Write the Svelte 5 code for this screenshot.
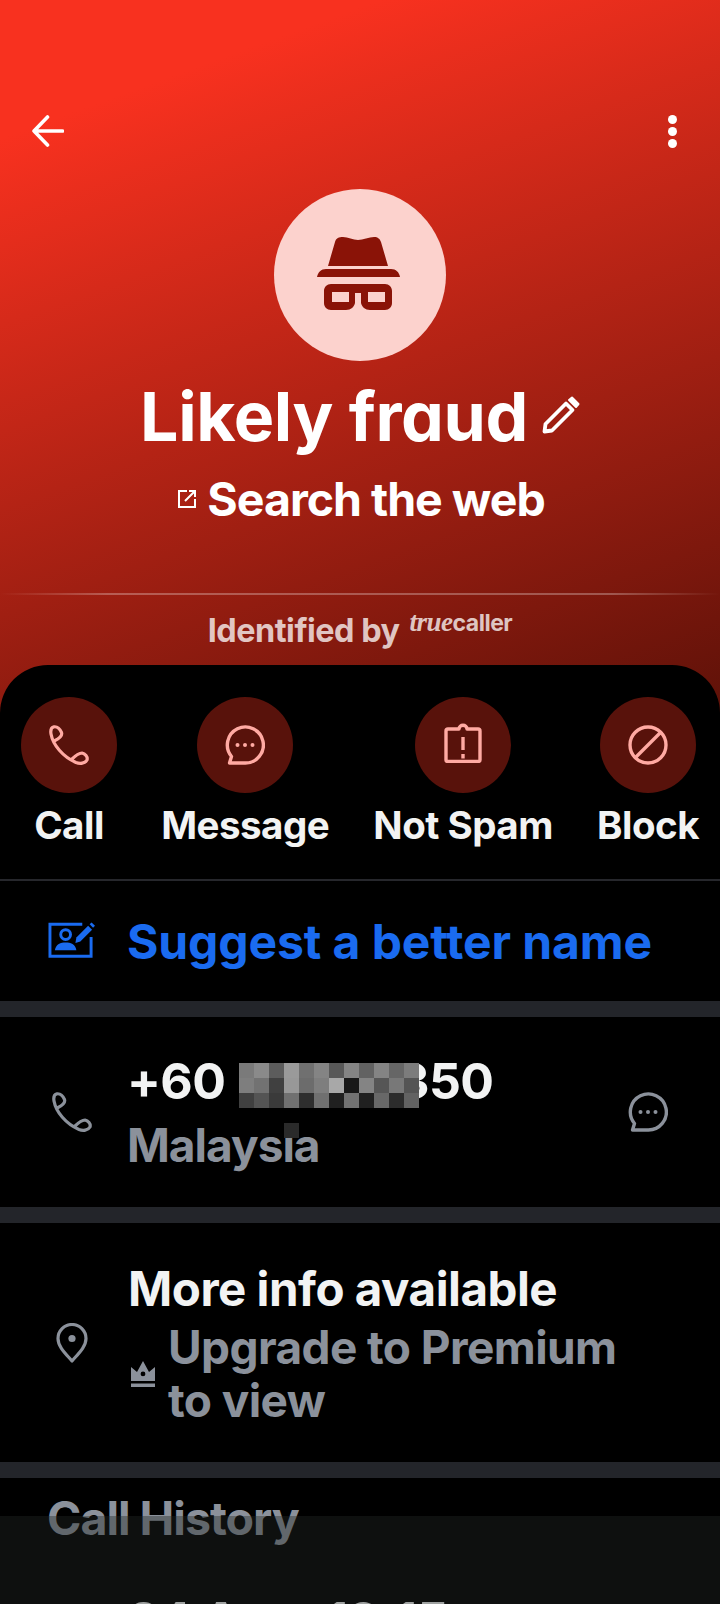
<script>
  const mosaic = [
    '#7a7a7a','#8a8a8a','#5c5c5c','#9a9a9a','#707070','#848484','#585858','#848484','#626262','#848484','#666666','#7c7c7c',
    '#7e7e7e','#727272','#404040','#989898','#6c6c6c','#7e7e7e','#a8a8a8','#181818','#848484','#565656','#787878','#545454',
    '#404040','#545454','#3a3a3a','#707070','#2e2e2e','#707070','#202020','#727272','#202020','#686868','#2c2c2c','#626262'
  ];
</script>

{#snippet phone()}
  <svg class="i40" viewBox="0 0 40 40" fill="none" stroke="currentColor" stroke-width="3.2" stroke-linejoin="round" stroke-linecap="round">
    <path d="M6 15.5 C10 13.5 13.5 10.5 12.5 7.5 C11 4 8 1.5 5 1.8 C2 2.5 1.5 6 2 9 C4 20 14 32 27 37.5 C31 39 36 38.5 38 35 C39 32 36 28.5 33 28 C30 28 26 31 22.5 34.5"/>
  </svg>
{/snippet}

{#snippet bubble()}
  <svg class="i40" viewBox="0 0 40 40" fill="none" stroke="currentColor" stroke-width="3.4" stroke-linejoin="round">
    <path d="M20 38 H4.5 L6.5 31.5 A18 18 0 1 1 20 38 Z"/>
    <circle cx="12.5" cy="20" r="2" fill="currentColor" stroke="none"/>
    <circle cx="20" cy="20" r="2" fill="currentColor" stroke="none"/>
    <circle cx="27.5" cy="20" r="2" fill="currentColor" stroke="none"/>
  </svg>
{/snippet}

<div class="page">
  <header class="hero">
    <div class="topbar">
      <svg class="back" viewBox="0 0 32 32" fill="none" stroke="#fff" stroke-width="3.6" stroke-linecap="round" stroke-linejoin="round">
        <path d="M2 16 H30.5 M15.5 2 L2 16 L15.5 30"/>
      </svg>
      <div class="dots"><i></i><i></i><i></i></div>
    </div>
    <div class="avatar">
      <svg viewBox="0 0 172 172" fill="#8a1307">
        <path d="M54 77 L61 53 C62 49 65 48 69 48 C74 48 79 51 84 51 C89 51 95 48 100 48 C104 48 106 50 107 53 L114 77 Z"/>
        <path d="M43 88 C44 83 47 80 52 80 H117 C122 80 125 83 126 88 Z"/>
        <path fill-rule="evenodd" d="M57 95 H111 C115 95 118 98 118 102 V114 C118 118 115 121 111 121 H96 C91 121 88 118 87 114 V104 H81 V114 C80 118 77 121 72 121 H57 C53 121 50 118 50 114 V102 C50 98 53 95 57 95 Z M58 103 V113 H75 V103 Z M94 103 V113 H111 V103 Z"/>
      </svg>
    </div>
    <div class="name">
      <h1>Likely fraud</h1>
      <svg class="pencil" viewBox="0 0 38 38" fill="none" stroke="#fff" stroke-width="3.8" stroke-linejoin="round">
        <path d="M2.5 35.5 L3.5 28 L24 7.5 L30.5 14 L10 34.5 Z"/>
        <path d="M27 4 L30 1.5 L36.5 8 L34 11 Z" fill="#fff" stroke-width="2"/>
      </svg>
    </div>
    <div class="web">
      <svg class="ext" viewBox="0 0 18 18" fill="none" stroke="#fff" stroke-width="2">
        <path d="M9 1 H1 V17 H17 V9 M7 11 L16.5 1.5 M11 1 H17 V7"/>
      </svg>
      <span>Search the web</span>
    </div>
    <div class="rule"></div>
    <div class="ident">
      <span>Identified by</span>
      <span class="logo"><em>true</em>caller</span>
    </div>
  </header>

  <main class="sheet">
    <div class="actions">
      <div class="act">
        <div class="disc">{@render phone()}</div>
        <span>Call</span>
      </div>
      <div class="act">
        <div class="disc">{@render bubble()}</div>
        <span>Message</span>
      </div>
      <div class="act">
        <div class="disc">
          <svg class="i40 lift" viewBox="0 0 40 40" fill="none" stroke="currentColor" stroke-width="3.4" stroke-linejoin="round">
            <path d="M5 6 H16 C16 1 24 1 24 6 H35 C36.5 6 37 7 37 8 V37 C37 38 36.5 38.5 35 38.5 H5 C3.5 38.5 3 38 3 37 V8 C3 7 3.5 6 5 6 Z"/>
            <path d="M20 14 V27 M20 31 V35.5"/>
          </svg>
        </div>
        <span>Not Spam</span>
      </div>
      <div class="act">
        <div class="disc">
          <svg class="i40" viewBox="0 0 40 40" fill="none" stroke="currentColor" stroke-width="3.4">
            <circle cx="20" cy="20" r="18"/>
            <path d="M7.5 32.5 L32.5 7.5"/>
          </svg>
        </div>
        <span>Block</span>
      </div>
    </div>

    <div class="row suggest">
      <svg class="pen-id" viewBox="0 0 48 36" fill="none" stroke="currentColor" stroke-width="3">
        <path d="M35 2 H2 V34.5 H44 V15"/>
        <circle cx="18" cy="12.5" r="5"/>
        <path d="M7 28.5 C8 22 13 20.5 18 20.5 C23 20.5 28 22 29 28.5 Z" fill="currentColor" stroke="none"/>
        <path d="M28 21 L29 15.5 L41 3.5 L45 7.5 L33 19.5 Z" fill="currentColor" stroke="none"/>
        <path d="M42.5 2 L44.5 0 L48 3.5 L46 5.5 Z" fill="currentColor" stroke="none"/>
      </svg>
      <span>Suggest a better name</span>
    </div>

    <div class="gap"></div>

    <div class="row number">
      <div class="ic">{@render phone()}</div>
      <div class="col">
        <div class="pri digits"><span>+60</span><span class="tail">350</span></div>
        <div class="sec">Malaysia</div>
      </div>
      <div class="ic right">{@render bubble()}</div>
      <div class="mosaic">
        {#each mosaic as c}
          <b style:background={c}></b>
        {/each}
      </div>
      <div class="speck"></div>
    </div>

    <div class="gap"></div>

    <div class="row info">
      <svg class="pin" viewBox="0 0 32 40" fill="none" stroke="currentColor" stroke-width="3.2" stroke-linejoin="round">
        <path d="M16 38 C10 31 2 24 2 15.5 A14 14 0 0 1 30 15.5 C30 24 22 31 16 38 Z"/>
        <circle cx="16" cy="15.5" r="3.6" fill="currentColor" stroke="none"/>
      </svg>
      <div class="col">
        <div class="pri">More info available</div>
        <div class="upgrade">
          <svg class="crown" viewBox="0 0 26 26" fill="#8b919b">
            <path fill-rule="evenodd" d="M1 6 L7 11 L13 0 L19 11 L25 6 V20 H1 Z M13 10.5 A2.4 2.4 0 1 0 13 15.3 A2.4 2.4 0 1 0 13 10.5 Z"/>
            <path d="M1 22.5 H25 V26 H1 Z"/>
          </svg>
          <span>Upgrade to Premium to view</span>
        </div>
      </div>
    </div>

    <div class="gap"></div>

    <div class="history">
      <h2>Call History</h2>
      <div class="entry">24 Aug, 19:15</div>
    </div>
    <div class="veil"></div>
  </main>
</div>

<style>
  :global(body) {
    margin: 0;
    background: #000;
  }
  .page {
    width: 720px;
    height: 1604px;
    overflow: hidden;
    position: relative;
    background: #000;
    font-family: Inter, "Liberation Sans", sans-serif;
    font-weight: 700;
    letter-spacing: -0.6px;
  }
  .hero {
    height: 725px;
    background: linear-gradient(160deg, #f8311f 14%, #5c1108 100%);
    box-sizing: border-box;
    padding-top: 115px;
    display: flex;
    flex-direction: column;
    align-items: center;
    color: #fff;
  }
  .topbar {
    width: 100%;
    box-sizing: border-box;
    padding: 0 43px 0 32px;
    display: flex;
    justify-content: space-between;
    align-items: center;
    height: 32px;
  }
  .back {
    width: 32px;
    height: 32px;
    display: block;
  }
  .dots {
    display: flex;
    flex-direction: column;
    gap: 3px;
  }
  .dots i {
    display: block;
    width: 9px;
    height: 9px;
    border-radius: 50%;
    background: #fff;
  }
  .avatar {
    margin-top: 42px;
    width: 172px;
    height: 172px;
    border-radius: 50%;
    background: #fcd2cd;
    flex: none;
  }
  .avatar svg {
    display: block;
    width: 172px;
    height: 172px;
  }
  .name {
    margin-top: 13px;
    height: 84px;
    display: flex;
    align-items: center;
    gap: 14px;
  }
  h1 {
    margin: 0;
    font-size: 68px;
    line-height: 84px;
    font-weight: 700;
    letter-spacing: -0.4px;
    font-feature-settings: "cv11";
    white-space: nowrap;
  }
  .pencil {
    width: 38px;
    height: 38px;
    flex: none;
    margin-top: -2px;
  }
  .web {
    margin-top: 13px;
    height: 56px;
    display: flex;
    align-items: center;
    gap: 11px;
    font-size: 46.5px;
    line-height: 56px;
    font-weight: 700;
    letter-spacing: -1px;
  }
  .ext {
    width: 18px;
    height: 18px;
    margin-left: 3px;
  }
  .rule {
    margin-top: 66px;
    width: 100%;
    height: 2px;
    flex: none;
    background: linear-gradient(90deg, rgba(255,255,255,0), rgba(255,255,255,.28) 15%, rgba(255,255,255,.28) 85%, rgba(255,255,255,0));
  }
  .ident {
    margin-top: 12px;
    display: flex;
    gap: 10px;
    align-items: flex-start;
    color: rgba(255,255,255,.76);
    font-size: 32.4px;
    line-height: 48px;
    letter-spacing: -0.5px;
  }
  .logo {
    font-size: 23px;
    line-height: 34px;
    margin-top: -2px;
  }
  .logo em {
    font-family: "Liberation Serif", serif;
    font-style: italic;
    font-weight: 700;
    font-size: 27px;
  }
  .sheet {
    position: absolute;
    left: 0;
    right: 0;
    top: 665px;
    bottom: 0;
    background: #000;
    border-radius: 48px 48px 0 0;
    overflow: hidden;
  }
  .actions {
    box-sizing: border-box;
    padding: 32px 21px 0;
    display: flex;
    justify-content: space-between;
    border-bottom: 2px solid #26272c;
    height: 216px;
  }
  .act {
    display: flex;
    flex-direction: column;
    align-items: center;
    gap: 8px;
    color: #f2f3f3;
    font-size: 38.5px;
    line-height: 48px;
    letter-spacing: -0.5px;
    white-space: nowrap;
  }
  .disc {
    width: 96px;
    height: 96px;
    border-radius: 50%;
    background: #58120b;
    color: #ffaaa3;
    display: flex;
    align-items: center;
    justify-content: center;
  }
  .i40 {
    display: block;
    width: 40px;
    height: 40px;
  }
  .lift {
    margin-top: -4px;
  }
  .row {
    position: relative;
    display: flex;
    align-items: center;
    box-sizing: border-box;
    color: #8b919b;
  }
  .suggest {
    height: 120px;
    padding-left: 48px;
    gap: 32px;
    color: #1a6bf0;
    font-size: 48px;
    letter-spacing: -0.1px;
    white-space: nowrap;
  }
  .pen-id {
    width: 47px;
    height: 36px;
    flex: none;
    margin-top: -2px;
  }
  .gap {
    height: 16px;
    background: #23252a;
  }
  .number {
    height: 190px;
    padding-left: 52px;
    gap: 35px;
  }
  .ic {
    flex: none;
  }
  .right {
    margin-left: auto;
    margin-right: 52px;
  }
  .col {
    display: flex;
    flex-direction: column;
  }
  .pri {
    color: #f2f3f3;
    font-size: 50px;
    line-height: 60px;
    letter-spacing: -0.6px;
    white-space: nowrap;
  }
  .digits {
    display: flex;
    margin-top: 2px;
  }
  .tail {
    margin-left: 172px;
  }
  .sec {
    font-size: 46px;
    line-height: 60px;
    letter-spacing: -1px;
    margin-top: 4px;
  }
  .mosaic {
    position: absolute;
    left: 239px;
    top: 46px;
    display: grid;
    grid-template-columns: repeat(12, 15px);
    grid-auto-rows: 15px;
  }
  .mosaic b {
    display: block;
  }
  .speck {
    position: absolute;
    left: 284px;
    top: 106px;
    width: 15px;
    height: 15px;
    background: #2a2a2a;
  }
  .info {
    height: 239px;
    padding-left: 56px;
    gap: 40px;
    align-items: center;
  }
  .pin {
    width: 32px;
    height: 40px;
    flex: none;
  }
  .info .col {
    margin-top: 1px;
  }
  .info .pri {
    font-size: 47.5px;
    letter-spacing: -0.5px;
  }
  .upgrade {
    display: flex;
    align-items: center;
    gap: 12px;
    font-size: 46px;
    line-height: 53px;
    letter-spacing: -0.6px;
    width: 490px;
    margin-top: 2px;
    padding-left: 2px;
  }
  .crown {
    width: 26px;
    height: 26px;
    flex: none;
  }
  .history {
    padding: 12px 0 0 47px;
    color: #8b919b;
  }
  h2 {
    margin: 0;
    font-size: 46.5px;
    line-height: 56px;
    font-weight: 700;
    letter-spacing: -1px;
  }
  .entry {
    margin: 44px 0 0 81px;
    color: #f2f3f3;
    font-size: 50px;
    line-height: 60px;
    letter-spacing: -0.6px;
  }
  .veil {
    position: absolute;
    left: 0;
    right: 0;
    top: 851px;
    bottom: 0;
    background: rgba(35, 40, 37, .4);
  }
</style>
